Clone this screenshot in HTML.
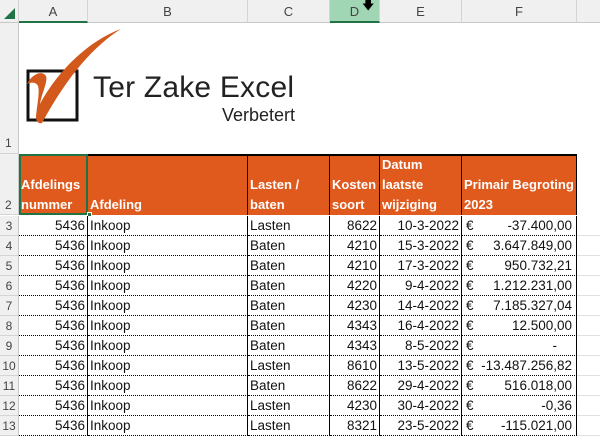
<!DOCTYPE html>
<html><head><style>
body{margin:0;width:600px;height:438px;overflow:hidden;background:#fff;font-family:"Liberation Sans",sans-serif;position:relative}
.a{position:absolute;box-sizing:border-box}
.ch{top:0;height:23px;background:#f0f0f0;border-right:1px solid #d4d4d4;border-bottom:1px solid #c8c8c8;font-size:13px;color:#444;text-align:center;line-height:23px}
.rh{left:0;width:19px;background:#f0f0f0;border-bottom:1px solid #d4d4d4;border-right:1px solid #c8c8c8;font-size:12px;color:#444;text-align:center}
.h{background:#e05a1e;color:#fff;font-weight:bold;font-size:13px;line-height:20px;padding:0 2px;display:flex;flex-direction:column;justify-content:flex-end;border-right:1.5px solid #000;top:154px;height:61px;border-top:2px solid #000}
.c{font-size:13.5px;line-height:20px;height:20px;border-bottom:1px dotted #000;border-right:1.5px solid #000;padding:0 2px;white-space:nowrap;color:#111}
.r{text-align:right}
</style></head><body>
<div class="a ch" style="left:0;width:19px"><svg width="19" height="23"><polygon points="15,8 15,19 4,19" fill="#217346"/></svg></div>
<div class="a ch" style="left:19px;width:69px;border-bottom:2px solid #217346">A</div>
<div class="a ch" style="left:88px;width:160px">B</div>
<div class="a ch" style="left:248px;width:82px">C</div>
<div class="a ch" style="left:330px;width:50px;background:#a0d6b4;border-bottom:2px solid #217346">D</div>
<div class="a ch" style="left:380px;width:82px">E</div>
<div class="a ch" style="left:462px;width:115px">F</div>
<div class="a ch" style="left:577px;width:23px;border-right:none"></div>
<div class="a" style="left:362px;top:0;font-size:12px;line-height:10px">&#129095;</div>
<div class="a rh" style="top:23px;height:131px"><span style="position:absolute;left:5px;top:113px;line-height:14px">1</span></div>
<div class="a rh" style="top:154px;height:61px"><span style="position:absolute;left:5px;top:44px;line-height:14px">2</span></div>
<svg class="a" style="left:20px;top:25px" width="110" height="100" viewBox="20 25 110 100">
<rect x="28" y="71" width="49" height="49" fill="none" stroke="#111" stroke-width="3"/>
<path d="M27,84 C32,74 42,70 46,76 C48,82 42,92 40,104 C58,70 90,40 121,29 C95,45 68,75 42,123 C38,124 36,121 36,117 C37,105 40,92 38,86 C36,82 31,82 27,84Z" fill="#d2581c"/>
</svg>
<div class="a" style="left:93px;top:71px;font-size:30px;color:#222;letter-spacing:0.2px">Ter Zake Excel</div>
<div class="a" style="left:222px;top:105px;font-size:18px;color:#222">Verbetert</div>
<div class="a h" style="left:19px;width:69px;outline:2px solid #217346;outline-offset:-2px;border-left:none">Afdelings<br>nummer</div>
<div class="a h" style="left:88px;width:160px">Afdeling</div>
<div class="a h" style="left:248px;width:82px">Lasten /<br>baten</div>
<div class="a h" style="left:330px;width:50px">Kosten<br>soort</div>
<div class="a h" style="left:380px;width:82px">Datum<br>laatste<br>wijziging</div>
<div class="a h" style="left:462px;width:115px">Primair Begroting<br>2023</div>
<div class="a" style="left:87px;top:212px;width:5px;height:5px;background:#217346;border:1px solid #fff"></div>
<div id="rows"></div>
<script>
var d=[["Lasten",8622,"10-3-2022","-37.400,00"],["Baten",4210,"15-3-2022","3.647.849,00"],["Baten",4210,"17-3-2022","950.732,21"],["Baten",4220,"9-4-2022","1.212.231,00"],["Baten",4230,"14-4-2022","7.185.327,04"],["Baten",4343,"16-4-2022","12.500,00"],["Baten",4343,"8-5-2022","-&nbsp;&nbsp;&nbsp;&nbsp;"],["Lasten",8610,"13-5-2022","-13.487.256,82"],["Baten",8622,"29-4-2022","516.018,00"],["Lasten",4230,"30-4-2022","-0,36"],["Lasten",8321,"23-5-2022","-115.021,00"]];
var h="";d.forEach(function(r,i){var t=216+i*20;
h+='<div class="a rh" style="top:'+t+'px;height:20px;line-height:20px">'+(i+3)+'</div>';
h+='<div class="a c r" style="left:19px;top:'+t+'px;width:69px">5436</div>';
h+='<div class="a c" style="left:88px;top:'+t+'px;width:160px">Inkoop</div>';
h+='<div class="a c" style="left:248px;top:'+t+'px;width:82px">'+r[0]+'</div>';
h+='<div class="a c r" style="left:330px;top:'+t+'px;width:50px">'+r[1]+'</div>';
h+='<div class="a c r" style="left:380px;top:'+t+'px;width:82px">'+r[2]+'</div>';
h+='<div class="a c r" style="left:462px;top:'+t+'px;width:115px;padding-left:4px;padding-right:4px"><span style="float:left">€</span>'+r[3]+'</div>';
h+='<div class="a" style="left:577px;top:'+t+'px;width:23px;height:20px;border-bottom:1px solid #e0e0e0"></div>';
});document.getElementById("rows").innerHTML=h;
</script>
</body></html>
